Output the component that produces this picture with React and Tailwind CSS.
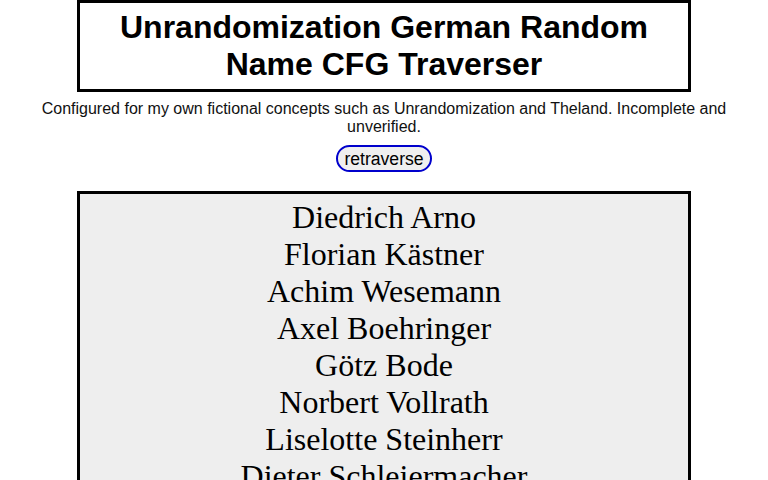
export default function App() {
  const names = [
    "Diedrich Arno",
    "Florian Kästner",
    "Achim Wesemann",
    "Axel Boehringer",
    "Götz Bode",
    "Norbert Vollrath",
    "Liselotte Steinherr",
    "Dieter Schleiermacher",
    "Hannelore Kessler",
  ];
  return (
    <div className="min-h-screen bg-white text-black" style={{ fontFamily: '"Liberation Sans", Arial, sans-serif' }}>
      <h1 className="mx-auto w-[80%] border-[3px] border-black px-2 py-[6px] text-center text-[32px] font-bold leading-[37px]">
        Unrandomization German Random Name CFG Traverser
      </h1>
      <p className="mt-[8px] px-2 text-center text-[16px] leading-[18px] text-[#111]">
        Configured for my own fictional concepts such as Unrandomization and Theland. Incomplete and unverified.
      </p>
      <div className="mt-[9px] flex justify-center">
        <button className="flex h-[27px] items-center rounded-full border-2 border-[#0000cc] bg-[#efefef] px-[6px] text-[17.6px] leading-[20px] text-black">
          retraverse
        </button>
      </div>
      <div
        className="mx-auto mt-[19px] w-[80%] border-[3px] border-black bg-[#eeeeee] py-[5px] text-center text-[32px] leading-[37px]"
        style={{ fontFamily: '"Liberation Serif", "Times New Roman", serif' }}
      >
        {names.map((n) => (
          <div key={n}>{n}</div>
        ))}
      </div>
    </div>
  );
}
